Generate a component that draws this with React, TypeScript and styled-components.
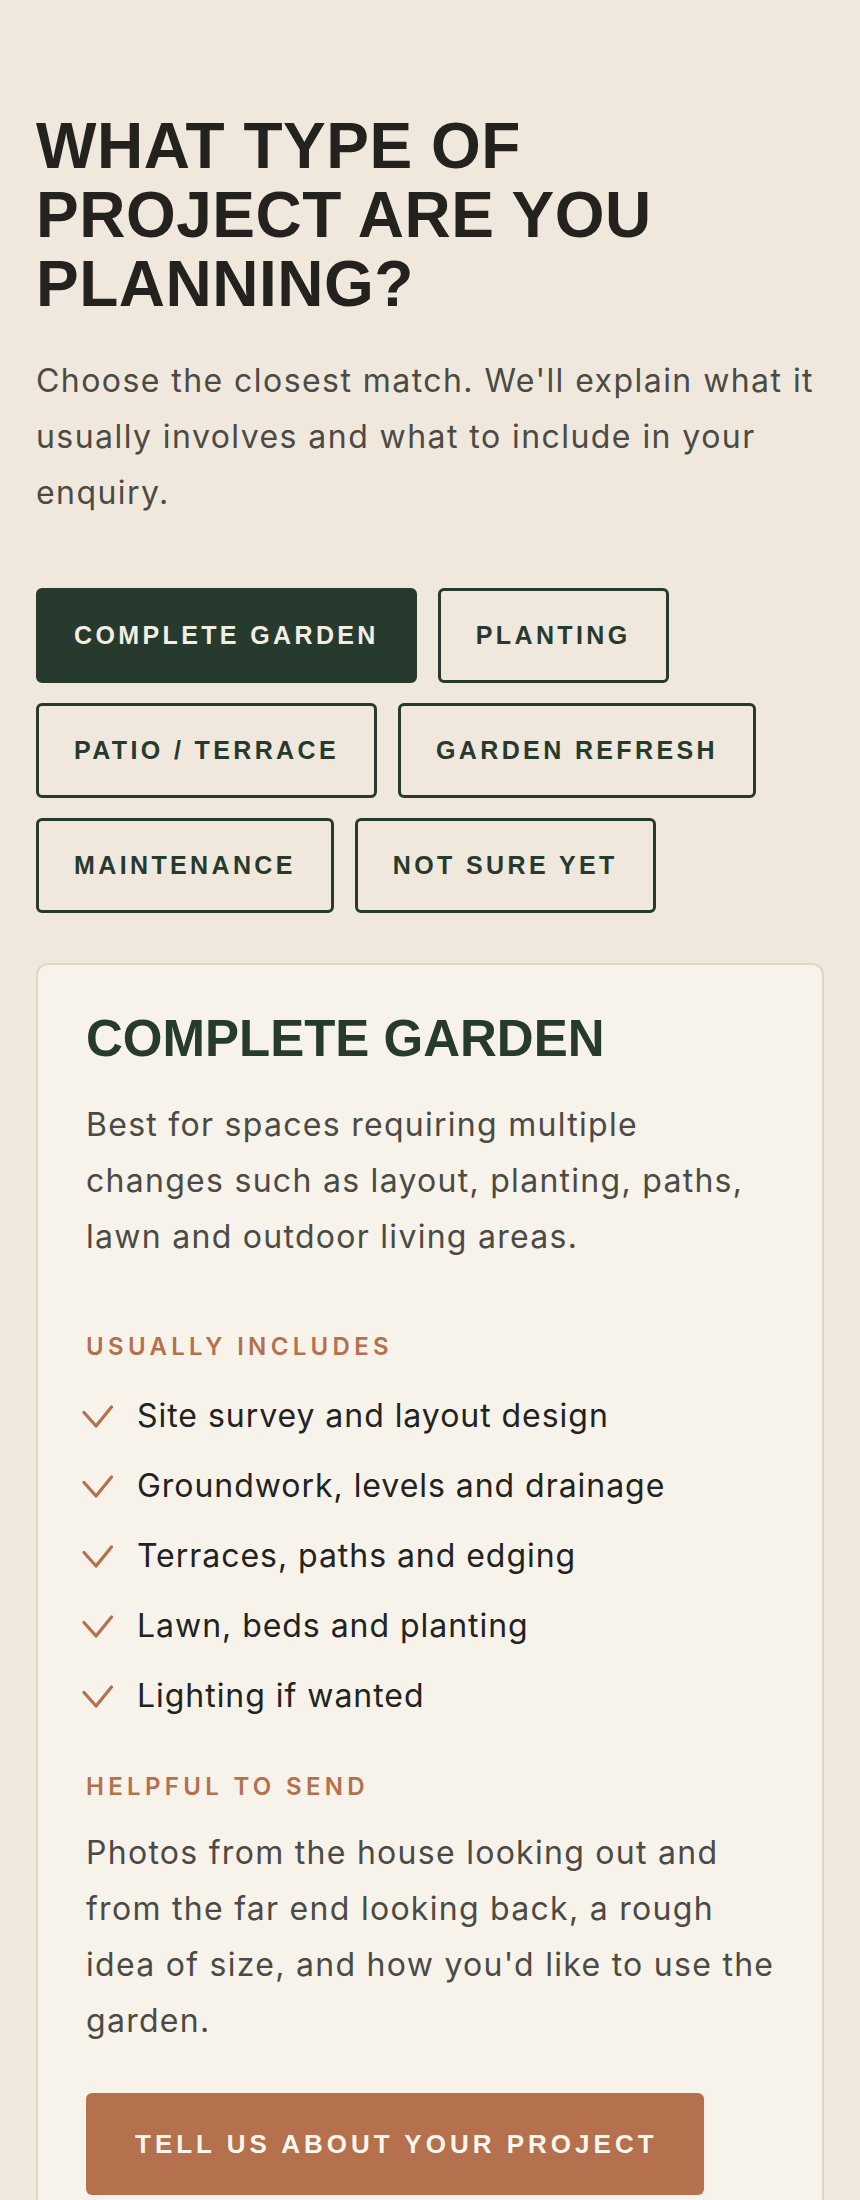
import React, { useState } from "react";
import styled, { createGlobalStyle } from "styled-components";

const GlobalStyle = createGlobalStyle`
  html, body {
    margin: 0;
    padding: 0;
    background: #f0e8dc;
  }
  * { box-sizing: border-box; }
`;

const Page = styled.main`
  padding: 112px 36px 0;
  min-height: 2200px;
  background: #f0e8dc;
`;

const Heading = styled.h1`
  margin: 0;
  font-family: "Liberation Sans", Arial, sans-serif;
  font-weight: 700;
  font-size: 64px;
  line-height: 69px;
  letter-spacing: 0.5px;
  color: #23221f;
  text-transform: uppercase;
  max-width: 700px;
`;

const Lead = styled.p`
  margin: 34px 0 0;
  font-family: Inter, "Noto Sans", sans-serif;
  font-size: 32px;
  line-height: 56px;
  letter-spacing: 0.045em;
  color: #4b4a44;
`;

const Options = styled.div`
  display: flex;
  flex-wrap: wrap;
  gap: 20px 21px;
  margin-top: 67px;
`;

const OptionButton = styled.button<{ $active: boolean }>`
  font-family: "Liberation Sans", Arial, sans-serif;
  font-weight: 700;
  font-size: 25px;
  line-height: 29px;
  letter-spacing: 0.135em;
  text-transform: uppercase;
  padding: 30px 35px;
  border: 3px solid #263a2e;
  border-radius: 6px;
  background: ${(p) => (p.$active ? "#263a2e" : "transparent")};
  color: ${(p) => (p.$active ? "#f3ede2" : "#263a2e")};
  cursor: pointer;
`;

const Card = styled.section`
  margin-top: 50px;
  background: #f7f3eb;
  border: 2px solid #ddd6c9;
  border-radius: 12px;
  padding: 46px 39px 48px 48px;
`;

const CardTitle = styled.h2`
  margin: 0;
  font-family: "Liberation Sans", Arial, sans-serif;
  font-weight: 700;
  font-size: 51px;
  line-height: 56px;
  color: #263a2e;
  text-transform: uppercase;
`;

const Body = styled.p<{ $top: number; $max?: number }>`
  margin: ${(p) => p.$top}px 0 0;
  max-width: ${(p) => (p.$max ? `${p.$max}px` : "none")};
  font-family: Inter, "Noto Sans", sans-serif;
  font-size: 32px;
  line-height: 56px;
  letter-spacing: 0.04em;
  color: #4b4a44;
`;

const Label = styled.h3<{ $top: number }>`
  margin: ${(p) => p.$top}px 0 0;
  font-family: Inter, "Noto Sans", sans-serif;
  font-weight: 600;
  font-size: 24px;
  line-height: 32px;
  letter-spacing: 0.18em;
  text-transform: uppercase;
  color: #b5704d;
`;

const List = styled.ul`
  list-style: none;
  margin: 29px 0 0 -4px;
  padding: 0;
  display: flex;
  flex-direction: column;
  gap: 22px;
`;

const Item = styled.li`
  display: flex;
  align-items: center;
  gap: 24px;
  font-family: Inter, "Noto Sans", sans-serif;
  font-size: 32px;
  line-height: 48px;
  letter-spacing: 0.03em;
  color: #22221e;
`;

const CheckIcon = styled.svg`
  flex: none;
  width: 31px;
  height: 23px;
`;

const Cta = styled.button`
  margin-top: 44px;
  font-family: "Liberation Sans", Arial, sans-serif;
  font-weight: 700;
  font-size: 26px;
  line-height: 30px;
  letter-spacing: 0.154em;
  text-transform: uppercase;
  padding: 36px 46px 36px 49px;
  border: none;
  border-radius: 6px;
  background: #b5704d;
  color: #fbf6ee;
  cursor: pointer;
`;

const Check = () => (
  <CheckIcon viewBox="0 0 31 23" fill="none" aria-hidden="true">
    <path
      d="M2 7.5 L14 21 L29.5 2"
      stroke="#b5704d"
      strokeWidth="3.2"
      strokeLinecap="round"
      strokeLinejoin="round"
    />
  </CheckIcon>
);

const options = [
  "Complete garden",
  "Planting",
  "Patio / terrace",
  "Garden refresh",
  "Maintenance",
  "Not sure yet",
];

const includes = [
  "Site survey and layout design",
  "Groundwork, levels and drainage",
  "Terraces, paths and edging",
  "Lawn, beds and planting",
  "Lighting if wanted",
];

export default function App() {
  const [active, setActive] = useState(0);
  return (
    <>
      <GlobalStyle />
      <Page>
        <Heading>What type of project are you planning?</Heading>
        <Lead>
          Choose the closest match. We'll explain what it usually involves and
          what to include in your enquiry.
        </Lead>
        <Options>
          {options.map((o, i) => (
            <OptionButton key={o} $active={i === active} onClick={() => setActive(i)}>
              {o}
            </OptionButton>
          ))}
        </Options>
        <Card>
          <CardTitle>Complete garden</CardTitle>
          <Body $top={30} $max={680}>
            Best for spaces requiring multiple changes such as layout, planting,
            paths, lawn and outdoor living areas.
          </Body>
          <Label $top={66}>Usually includes</Label>
          <List>
            {includes.map((t) => (
              <Item key={t}>
                <Check />
                {t}
              </Item>
            ))}
          </List>
          <Label $top={51}>Helpful to send</Label>
          <Body $top={22}>
            Photos from the house looking out and from the far end looking back,
            a rough idea of size, and how you'd like to use the garden.
          </Body>
          <Cta>Tell us about your project</Cta>
        </Card>
      </Page>
    </>
  );
}
